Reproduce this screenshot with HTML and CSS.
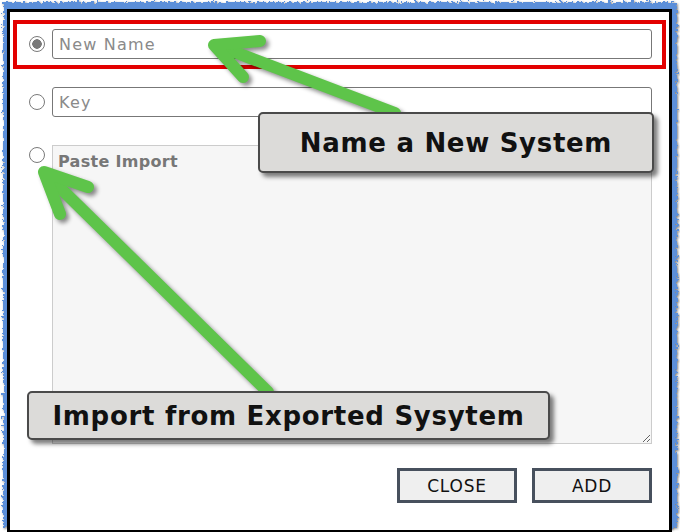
FILE: index.html
```html
<!DOCTYPE html>
<html lang="en">
<head>
    <meta charset="UTF-8">
    <title>Add System</title>
    <link rel="stylesheet" href="styles.css">
</head>
<body>
    <svg class="defs" width="0" height="0">
        <filter id="torn" x="-5%" y="-5%" width="110%" height="110%">
            <feTurbulence type="fractalNoise" baseFrequency="0.35" numOctaves="2" seed="4" result="noise"/>
            <feDisplacementMap in="SourceGraphic" in2="noise" scale="7" xChannelSelector="R" yChannelSelector="G"/>
        </filter>
    </svg>

    <div class="sheet">
        <div class="torn"></div>

        <div class="dialog">
            <div class="highlight">
                <label class="row">
                    <input type="radio" name="mode" checked>
                    <input type="text" class="field" placeholder="New Name">
                </label>
            </div>

            <label class="row row-key">
                <input type="radio" name="mode">
                <input type="text" class="field" placeholder="Key">
            </label>

            <label class="row row-import">
                <input type="radio" name="mode">
                <textarea class="paste" placeholder="Paste Import"></textarea>
            </label>

            <div class="actions">
                <button>CLOSE</button>
                <button>ADD</button>
            </div>
        </div>

        <svg class="arrows" width="680" height="532" viewBox="0 0 680 532">
            <g fill="none" stroke="#5ec44a" stroke-width="12" stroke-linecap="round" stroke-linejoin="round">
                <path d="M395 113 L216 45"/>
                <path d="M260 41 L214 45 L243 77"/>
                <path d="M268 392 L46 174"/>
                <path d="M88 187 L44 172 L60 214"/>
            </g>
        </svg>

        <div class="callout callout-name">Name a New System</div>
        <div class="callout callout-import">Import from Exported Sysytem</div>
    </div>
</body>
</html>
```

FILE: styles.css
```css
body {
    margin: 0;
    background: #fff;
    font-family: "DejaVu Sans", sans-serif;
}
.defs {
    position: absolute;
}
.sheet {
    position: relative;
    display: flow-root;
    width: 680px;
    height: 532px;
}
.torn {
    position: absolute;
    top: 2px;
    left: 3px;
    right: 3px;
    bottom: 4px;
    background: #5b8fd9;
    filter: url(#torn) drop-shadow(1px 1px 1px rgba(0, 0, 0, 0.5));
}
.dialog {
    position: relative;
    margin: 9px 8px 0 7px;
    height: 510px;
    border: 3px solid #000;
    background: #fff;
    padding: 8px 3px 0 3px;
}
.highlight {
    border: 4px solid #e30000;
    padding: 5px 10px 6px 12px;
}
.row {
    display: flex;
    align-items: center;
    gap: 7px;
}
.row-key,
.row-import {
    padding: 0 14px 0 16px;
}
.row-key {
    margin-top: 18px;
}
.row-import {
    margin-top: 28px;
    align-items: flex-start;
}
input[type="radio"] {
    appearance: none;
    -webkit-appearance: none;
    flex: none;
    width: 16px;
    height: 16px;
    margin: 0;
    border: 1.5px solid #7a7a7a;
    border-radius: 50%;
    background: #fff;
}
input[type="radio"]:checked {
    background: radial-gradient(circle, #7a7a7a 0 4.5px, #fff 5px);
}
.row-import input[type="radio"] {
    margin-top: 2px;
}
.field {
    flex: 1;
    height: 30px;
    box-sizing: border-box;
    margin: 0;
    padding: 0 6px;
    border: 1px solid #777;
    border-radius: 3px;
    font-family: "DejaVu Sans", sans-serif;
    font-size: 16px;
    letter-spacing: 1.2px;
    color: #333;
}
.field::placeholder {
    color: #8a8a8a;
}
.paste {
    flex: 1;
    height: 299px;
    box-sizing: border-box;
    margin: 0;
    padding: 6px 5px;
    border: 1px solid #ccc;
    background: #f6f6f6;
    font-family: "DejaVu Sans", sans-serif;
    font-size: 16px;
    font-weight: bold;
    letter-spacing: 0.3px;
    color: #333;
}
.paste::placeholder {
    color: #777;
}
.actions {
    display: flex;
    justify-content: flex-end;
    gap: 15px;
    margin-top: 24px;
    padding-right: 14px;
}
button {
    width: 120px;
    height: 35px;
    border: 3px solid #47505d;
    background: #efefef;
    font-family: "DejaVu Sans", sans-serif;
    font-size: 17px;
    letter-spacing: 0.8px;
    color: #111;
    cursor: pointer;
}
.arrows {
    position: absolute;
    top: 0;
    left: 0;
    filter: drop-shadow(3px 3px 2px rgba(0, 0, 0, 0.45));
}
.callout {
    position: absolute;
    box-sizing: border-box;
    display: flex;
    align-items: center;
    justify-content: center;
    background: #dcdbd9;
    border: 2px solid #4a4a4a;
    border-radius: 5px;
    box-shadow: 4px 4px 4px rgba(0, 0, 0, 0.5);
    font-size: 26px;
    font-weight: bold;
    letter-spacing: 0.7px;
    color: #111;
}
.callout-name {
    left: 258px;
    top: 112px;
    width: 396px;
    height: 61px;
}
.callout-import {
    left: 27px;
    top: 391px;
    width: 523px;
    height: 49px;
}
```
